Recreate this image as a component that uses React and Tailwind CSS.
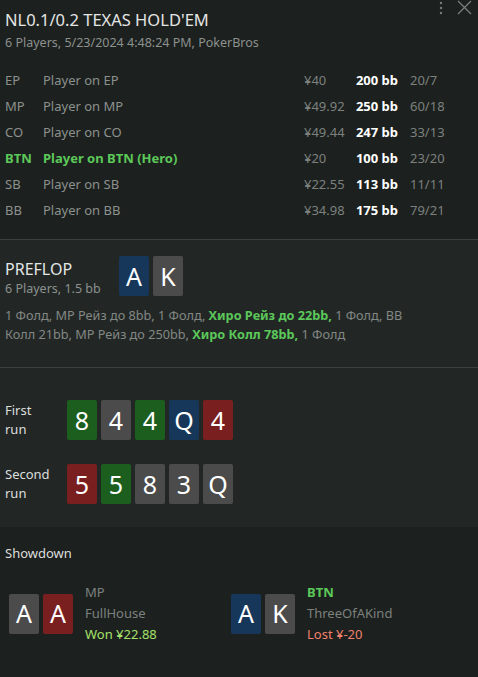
import React from 'react';

const cardColors = {
  b: 'bg-[#16375a]',
  g: 'bg-[#4b4b4b]',
  n: 'bg-[#1b5e1e]',
  r: 'bg-[#7a1f1f]',
};

const Card = ({ v, c }) => (
  <div className={`w-[30px] h-[40px] rounded-[2px] flex items-center justify-center text-white text-[25px] leading-none ${cardColors[c]}`}>
    {v}
  </div>
);

const Cards = ({ list }) => (
  <div className="flex gap-[4px]">
    {list.map((x, i) => <Card key={i} v={x[0]} c={x[1]} />)}
  </div>
);

const players = [
  { pos: 'EP', name: 'Player on EP', money: '¥40', bb: '200 bb', stat: '20/7' },
  { pos: 'MP', name: 'Player on MP', money: '¥49.92', bb: '250 bb', stat: '60/18' },
  { pos: 'CO', name: 'Player on CO', money: '¥49.44', bb: '247 bb', stat: '33/13' },
  { pos: 'BTN', name: 'Player on BTN (Hero)', money: '¥20', bb: '100 bb', stat: '23/20', hero: true },
  { pos: 'SB', name: 'Player on SB', money: '¥22.55', bb: '113 bb', stat: '11/11' },
  { pos: 'BB', name: 'Player on BB', money: '¥34.98', bb: '175 bb', stat: '79/21' },
];

export default function App() {
  return (
    <div className="w-[478px] h-[677px] bg-[#1c201e] text-[#8c918e] overflow-hidden" style={{ fontFamily: '"Noto Sans", "Open Sans", sans-serif' }}>
      {/* header */}
      <div className="relative px-[5px] pt-[8px] pb-[15px]">
        <div className="absolute right-[6px] top-[0px] flex items-center gap-[14px] text-[#7a7f7c]">
          <svg width="4" height="14" viewBox="0 0 4 14"><circle cx="2" cy="2" r="1.2" fill="currentColor" /><circle cx="2" cy="7" r="1.2" fill="currentColor" /><circle cx="2" cy="12" r="1.2" fill="currentColor" /></svg>
          <svg width="15" height="15" viewBox="0 0 15 15"><path d="M1 1 L14 14 M14 1 L1 14" stroke="currentColor" strokeWidth="1.3" /></svg>
        </div>
        <div className="text-[16.5px] text-[#e4e6e5] leading-[24px]">NL0.1/0.2 TEXAS HOLD'EM</div>
        <div className="text-[12.5px] leading-[18px] mt-[2px]">6 Players, 5/23/2024 4:48:24 PM, PokerBros</div>

        <div className="mt-[16px] flex flex-col">
          {players.map(p => (
            <div key={p.pos} className={`flex items-center h-[26px] text-[13px] ${p.hero ? 'text-[#5cc85a] font-bold' : ''}`}>
              <div className="w-[38px]">{p.pos}</div>
              <div className="flex-1">{p.name}</div>
              <div className="w-[51px] text-[#7c817e] font-normal">{p.money}</div>
              <div className="w-[43px] text-right text-white font-bold">{p.bb}</div>
              <div className="w-[75px] pl-[12px] text-[#7c817e] font-normal">{p.stat}</div>
            </div>
          ))}
        </div>
      </div>

      {/* preflop */}
      <div className="border-t border-[#3b403d] bg-[#222726] px-[5px] pt-[16px] pb-[23px]">
        <div className="flex gap-[14px]">
          <div className="w-[100px]">
            <div className="text-[16px] text-[#e4e6e5] leading-[22px] mt-[2px]">PREFLOP</div>
            <div className="text-[12.5px] leading-[18px]">6 Players, 1.5 bb</div>
          </div>
          <Cards list={[['A', 'b'], ['K', 'g']]} />
        </div>
        <div className="mt-[8px] max-w-[406px] text-[12.7px] leading-[19px] text-[#838884]">
          1 Фолд, MP Рейз до 8bb, 1 Фолд, <span className="text-[#5cc85a] font-bold">Хиро Рейз до 22bb,</span> 1 Фолд, BB Колл 21bb, MP Рейз до 250bb, <span className="text-[#5cc85a] font-bold">Хиро Колл 78bb,</span> 1 Фолд
        </div>
      </div>

      {/* runs */}
      <div className="border-t border-[#3b403d] bg-[#222726] px-[5px] pt-[32px] pb-[23px] flex flex-col gap-[24px]">
        <div className="flex items-center">
          <div className="w-[62px] text-[13px] leading-[19px] text-[#dcdedd]">First<br />run</div>
          <Cards list={[['8', 'n'], ['4', 'g'], ['4', 'n'], ['Q', 'b'], ['4', 'r']]} />
        </div>
        <div className="flex items-center">
          <div className="w-[62px] text-[13px] leading-[19px] text-[#dcdedd]">Second<br />run</div>
          <Cards list={[['5', 'r'], ['5', 'n'], ['8', 'g'], ['3', 'g'], ['Q', 'g']]} />
        </div>
      </div>

      {/* showdown */}
      <div className="px-[5px] pt-[16px]">
        <div className="text-[13px] text-[#dcdedd] leading-[20px]">Showdown</div>
        <div className="mt-[19px] flex">
          <div className="w-[222px] flex items-center pl-[4px] gap-[12px]">
            <Cards list={[['A', 'g'], ['A', 'r']]} />
            <div className="text-[13px] leading-[21px]">
              <div className="text-[#7c817e]">MP</div>
              <div className="text-[#7c817e]">FullHouse</div>
              <div className="text-[#a6e06a]">Won ¥22.88</div>
            </div>
          </div>
          <div className="flex items-center gap-[12px] pl-[4px]">
            <Cards list={[['A', 'b'], ['K', 'g']]} />
            <div className="text-[13px] leading-[21px]">
              <div className="text-[#5cc85a] font-bold">BTN</div>
              <div className="text-[#7c817e]">ThreeOfAKind</div>
              <div className="text-[#f0806e]">Lost ¥-20</div>
            </div>
          </div>
        </div>
      </div>
    </div>
  );
}
